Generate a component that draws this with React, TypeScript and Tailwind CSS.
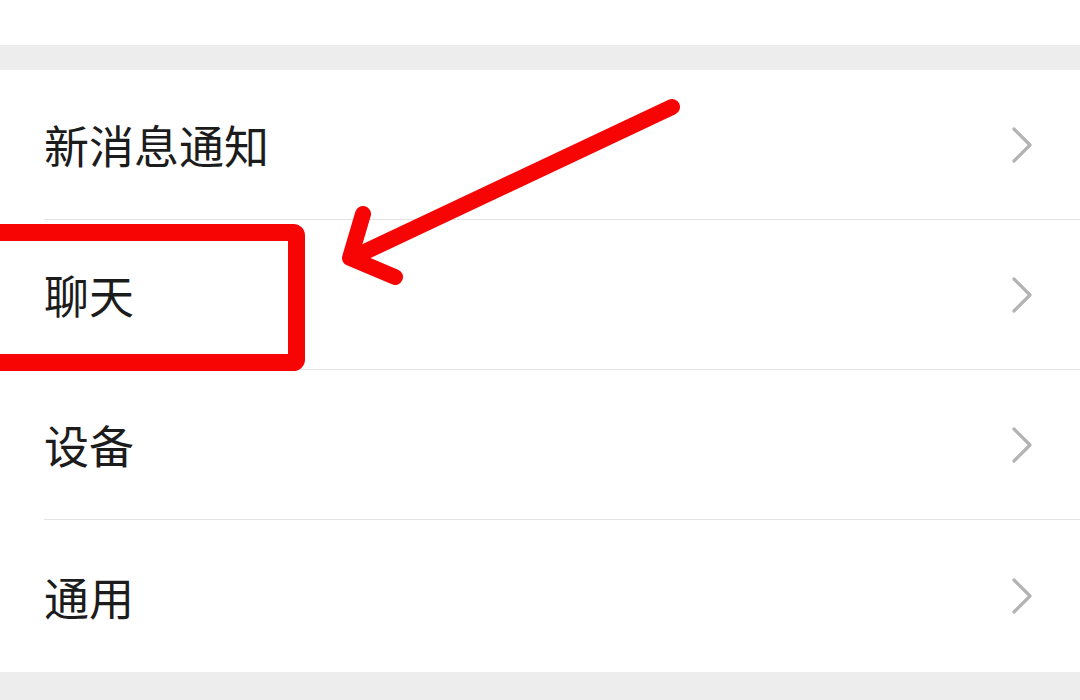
const rows = ["新消息通知", "聊天", "设备", "通用"];

function Chevron() {
  return (
    <svg width="22" height="38" viewBox="0 0 22 38" className="text-[#b3b3b3]">
      <polyline points="3,3 19,19 3,35" fill="none" stroke="currentColor" strokeWidth="3.2" strokeLinecap="round" strokeLinejoin="round" />
    </svg>
  );
}

export default function App() {
  return (
    <div className="relative h-[700px] w-[1080px] overflow-hidden bg-[#ededed] font-['Noto_Sans_CJK_SC',sans-serif]">
      <div className="h-[45px] bg-white" />
      <div className="h-[25px]" />
      <ul className="bg-white">
        {rows.map((label, i) => (
          <li key={label} className={`flex items-center pl-[44px] ${i === rows.length - 1 ? "h-[152px]" : "h-[150px]"}`}>
            <div className={`flex h-full flex-1 items-center justify-between pr-[47px] ${i === rows.length - 1 ? "" : "border-b border-[#e3e3e3]"}`}>
              <span className="text-[45px] leading-none text-[#1c1c1c]">{label}</span>
              <Chevron />
            </div>
          </li>
        ))}
      </ul>

      <svg className="pointer-events-none absolute inset-0" width="1080" height="700" viewBox="0 0 1080 700">
        <rect x="-10" y="232.5" width="306.5" height="130" rx="3" fill="none" stroke="#f70505" strokeWidth="17" strokeLinejoin="round" />
        <g fill="none" stroke="#f70505" strokeWidth="16" strokeLinecap="round" strokeLinejoin="round">
          <line x1="672" y1="107" x2="354" y2="257" />
          <polyline points="363,214 350,258 395,277" />
        </g>
      </svg>
    </div>
  );
}
